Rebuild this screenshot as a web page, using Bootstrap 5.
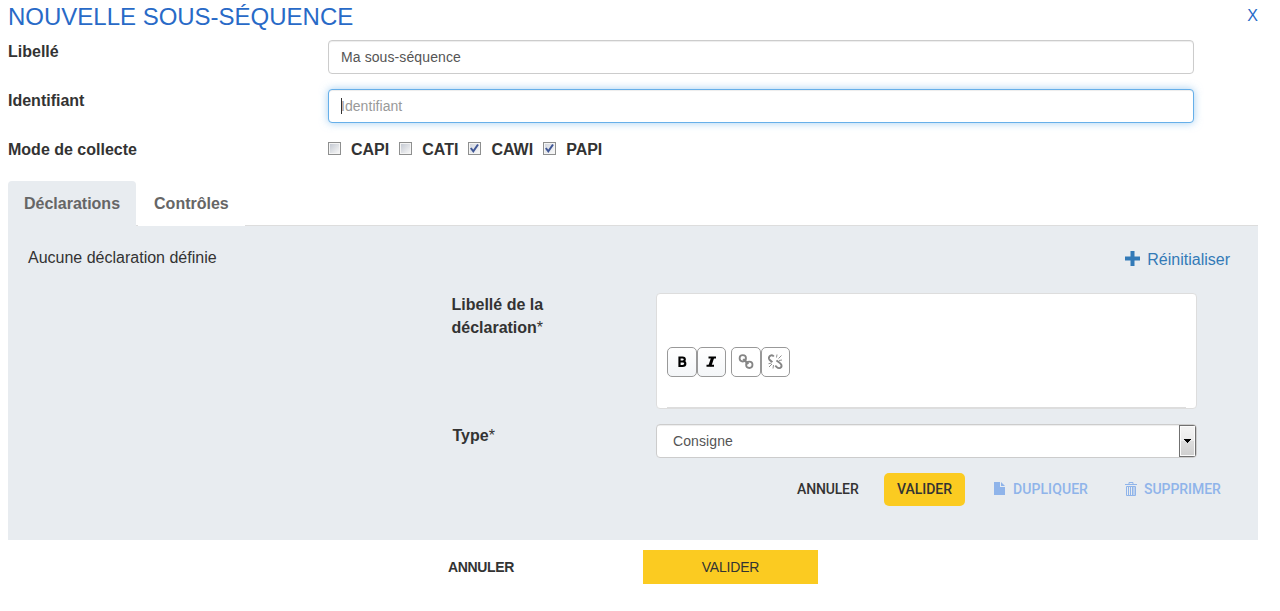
<!DOCTYPE html>
<html lang="fr">
<head>
<meta charset="utf-8">
<meta name="viewport" content="width=device-width, initial-scale=1">
<title>Nouvelle sous-séquence</title>
<link rel="stylesheet" href="https://cdn.jsdelivr.net/npm/bootstrap@5.3.0/dist/css/bootstrap.min.css">
<style>
body{font-family:"Liberation Sans",Arial,sans-serif;font-size:16px;line-height:23px;color:#333;background:#fff;overflow:hidden}
.page{width:1250px;margin-left:8px}
.heading{height:40px;color:#286ac7}
.heading h1{font-size:24px;line-height:34px;font-weight:400;letter-spacing:-.01px}
.closer{color:#286ac7;font-size:16px;line-height:32px}
.field-row{height:49px}
.field-name{width:320px;font-weight:700}
.form-control{height:34px;width:866px;font-size:14px;line-height:20px;padding:6px 12px;border:1px solid #ccc;border-radius:4px;color:#555;letter-spacing:.1px;box-shadow:inset 0 1px 1px rgba(0,0,0,.075)}
.form-control::placeholder{color:#999}
.form-control.active-field{border-color:#66afe9;letter-spacing:.05px;box-shadow:inset 0 1px 1px rgba(0,0,0,.075),0 0 8px rgba(102,175,233,.6)}
.caret-bar{left:13px;top:9px;width:1px;height:16px;background:#333}
.mode{margin-right:10px;height:23px}
.tick{appearance:none;width:13px;height:13px;margin:4px 10px 0 0;border:1px solid #8e8f8f;background:linear-gradient(135deg,#c5cad3,#f6f6f6) content-box,#f4f4f4;padding:1px}
.tick:checked{background:url("data:image/svg+xml,%3Csvg xmlns='http://www.w3.org/2000/svg' viewBox='0 0 11 11'%3E%3Cpath d='M1.800 5 4.300 8.300 9 1.500' fill='none' stroke='%23405796' stroke-width='2'/%3E%3C/svg%3E") border-box center/11px no-repeat,linear-gradient(135deg,#d3d7df,#f8f8f8) content-box,#f4f4f4}
.nav-tabs{height:45px;border-bottom:1px solid #ddd;--bs-nav-tabs-border-width:0px}
.nav-tabs .nav-link{height:45px;padding:11px 16px;font-weight:700;color:#666;border:0;border-radius:4px 4px 0 0;background:#fff;margin:0}
.nav-tabs .nav-link.active{background:#e8ecf0;color:#666}
.pane{height:314px;background:#e8ecf0}
.reset{color:#337ab7}
.editor{width:541px;height:116px;border:1px solid #ddd;border-radius:4px;background:#fff;padding:53px 10px 0}
.editor-line{height:1px;background:#ddd;margin-top:30px}
.tool{width:30px;height:30px;padding:0;border:1px solid #999;border-radius:5px;background:linear-gradient(#fff,#f4f6f8)}
.tool+.tool{width:29px}
.tool.plain{background:#fff}
.picker{width:541px;height:34px;border:1px solid #ccc;border-radius:4px;background:#fff;overflow:hidden}
.picker select{appearance:none;border:0;outline:0;background:transparent;color:#555;font-size:14px;letter-spacing:.1px;padding:0 16px;box-shadow:inset 0 1px 1px rgba(0,0,0,.075)}
.arrow{width:17px;height:32px;border:1px solid #707070;box-shadow:inset 0 0 0 1px #fbfbfb;background:linear-gradient(#f2f2f2 0 10%,#ebebeb 49%,#ddd 50%,#cfcfcf)}
.act{font-family:Roboto,sans-serif;font-size:14px;font-weight:500;line-height:20px;padding:0 0 2px;border:0;border-radius:0;color:#333;height:33px;flex-shrink:0}
.act.faded{color:#8fb4ea}
.act.yellow{border-radius:5px}
.yellow{background:#fbcb21!important}
.foot .btn{font-size:14px;line-height:20px;height:34px;padding:0;border:0;border-radius:0;color:#333}
svg{display:block}
</style>
<script src="https://cdn.jsdelivr.net/npm/bootstrap@5.3.0/dist/js/bootstrap.bundle.min.js"></script>
</head>
<body>
<main class="page">
  <header class="heading d-flex justify-content-between">
    <h1 class="m-0">NOUVELLE SOUS-SÉQUENCE</h1>
    <a class="closer text-decoration-none" href="#">X</a>
  </header>
  <div class="field-row d-flex"><label class="field-name" for="lib">Libellé</label><input id="lib" class="form-control" value="Ma sous-séquence"></div>
  <div class="field-row d-flex"><label class="field-name" for="ident">Identifiant</label>
    <div class="position-relative"><input id="ident" class="form-control active-field" placeholder="Identifiant"><span class="caret-bar position-absolute"></span></div></div>
  <div class="d-flex fw-bold" style="height:43px">
    <span class="field-name">Mode de collecte</span>
    <label class="d-flex mode"><input class="tick" type="checkbox"><span>CAPI</span></label>
    <label class="d-flex mode"><input class="tick" type="checkbox"><span>CATI</span></label>
    <label class="d-flex mode"><input class="tick" type="checkbox" checked><span>CAWI</span></label>
    <label class="d-flex mode"><input class="tick" type="checkbox" checked><span>PAPI</span></label>
  </div>
  <ul class="nav nav-tabs">
    <li class="nav-item"><a class="nav-link active" href="#">Déclarations</a></li>
    <li class="nav-item" style="margin-left:2px"><a class="nav-link" href="#">Contrôles</a></li>
  </ul>
  <section class="pane">
    <div class="d-flex justify-content-between" style="height:67px;padding:20px 28px 0 20px">
      <span>Aucune déclaration définie</span>
      <a class="reset d-flex text-decoration-none" style="padding-top:2px" href="#"><svg width="15" height="15" viewBox="0 0 15 15" style="margin:3px 7px 0 0"><path d="M5.500 0h4v5.500H15v4H9.500V15h-4V9.500H0v-4h5.500z" fill="#337ab7"/></svg>Réinitialiser</a>
    </div>
    <div class="d-flex" style="height:131px;padding-left:443.5px">
      <label class="fw-bold" style="width:204.5px">Libellé de la<br>déclaration<span class="fw-normal">*</span></label>
      <div class="editor">
        <div class="d-flex">
          <button class="tool" aria-label="Gras"><svg width="28" height="28" viewBox="0 0 28 28"><path d="M11.500 9.500h3q2.300 0 2.300 2 0 1.400-1.300 1.900 1.800.4 1.800 2.400 0 2.200-2.800 2.200h-3zM11.500 13.500h3.600" fill="none" stroke="#000" stroke-width="2.200"/></svg></button>
          <button class="tool" aria-label="Italique"><svg width="27" height="28" viewBox="0 0 27 28"><path d="M10.500 9.500h7.500M8.500 17.800h7.500" stroke="#000" stroke-width="2"/><path d="M14.700 9.500 11.800 18" stroke="#000" stroke-width="3"/></svg></button>
          <button class="tool plain" style="width:30px;margin-left:5px" aria-label="Lien"><svg width="28" height="28" viewBox="0 0 28 28" fill="none" stroke="#858585" stroke-width="1.800"><circle cx="10.800" cy="10.300" r="3.200"/><circle cx="17.300" cy="16.800" r="3.200"/><path d="m11.300 11 5 5" stroke-width="2.200"/></svg></button>
          <button class="tool plain" aria-label="Supprimer le lien"><svg width="27" height="28" viewBox="0 0 27 28" fill="none" stroke="#858585" stroke-width="1.900"><path d="M11.800 8.500C9.900 6 6.500 8 7 10.700c.4 1.600 2.200 2.300 3.400 3.500M14.500 12.400c1.300 1.300 4.300 2.700 4.900 4.500.8 2.700-2.400 4.400-4.600 2.200l-1.500-1.500"/><path d="m14.500 9.500.5-3M16.500 10.500l3-3M17 12.500l3-.5M11.500 17l-.5 3.500M10 16l-3 3M9.500 15l-3 .7" stroke-width=".9"/></svg></button>
        </div>
        <div class="editor-line"></div>
      </div>
    </div>
    <div class="d-flex" style="height:49px;padding-left:444.5px">
      <label class="fw-bold" style="width:203.5px">Type<span class="fw-normal">*</span></label>
      <div class="picker d-flex"><select class="flex-grow-1"><option>Consigne</option></select><span class="arrow"><svg width="15" height="30"><path d="M4 13h7v1H10v1H9v1H8v1H7v-1H6v-1H5v-1H4z" fill="#000"/></svg></span></div>
    </div>
    <div class="d-flex" style="padding-left:789px">
      <button class="btn act text-start" style="width:87px;letter-spacing:-.15px">ANNULER</button>
      <button class="btn act yellow" style="width:81px">VALIDER</button>
      <button class="btn act faded d-flex align-items-center" style="margin-left:29px;width:131px;letter-spacing:.08px"><svg width="11" height="13" viewBox="0 0 11 13" style="margin-right:8px"><path d="M0 0h6v5h5v8H0zM7 0l4 4H7z" fill="#8fb4ea"/></svg>DUPLIQUER</button>
      <button class="btn act faded d-flex align-items-center text-nowrap" style="letter-spacing:-.05px"><svg width="12" height="14" viewBox="0 0 12 14" style="margin-right:7px" fill="none" stroke="#8fb4ea"><path d="M0 2.500h12M4 2V.5h4V2M1.500 4.500h9v9h-9zM3.500 5v8M5.500 5v8M7.500 5v8M9 5v8"/></svg>SUPPRIMER</button>
    </div>
  </section>
  <footer class="foot d-flex" style="padding:10px 0 0 440px">
    <button class="btn fw-bold text-start" style="width:195px;letter-spacing:-.35px">ANNULER</button>
    <button class="btn yellow" style="width:175px;letter-spacing:-.2px">VALIDER</button>
  </footer>
</main>
</body>
</html>
